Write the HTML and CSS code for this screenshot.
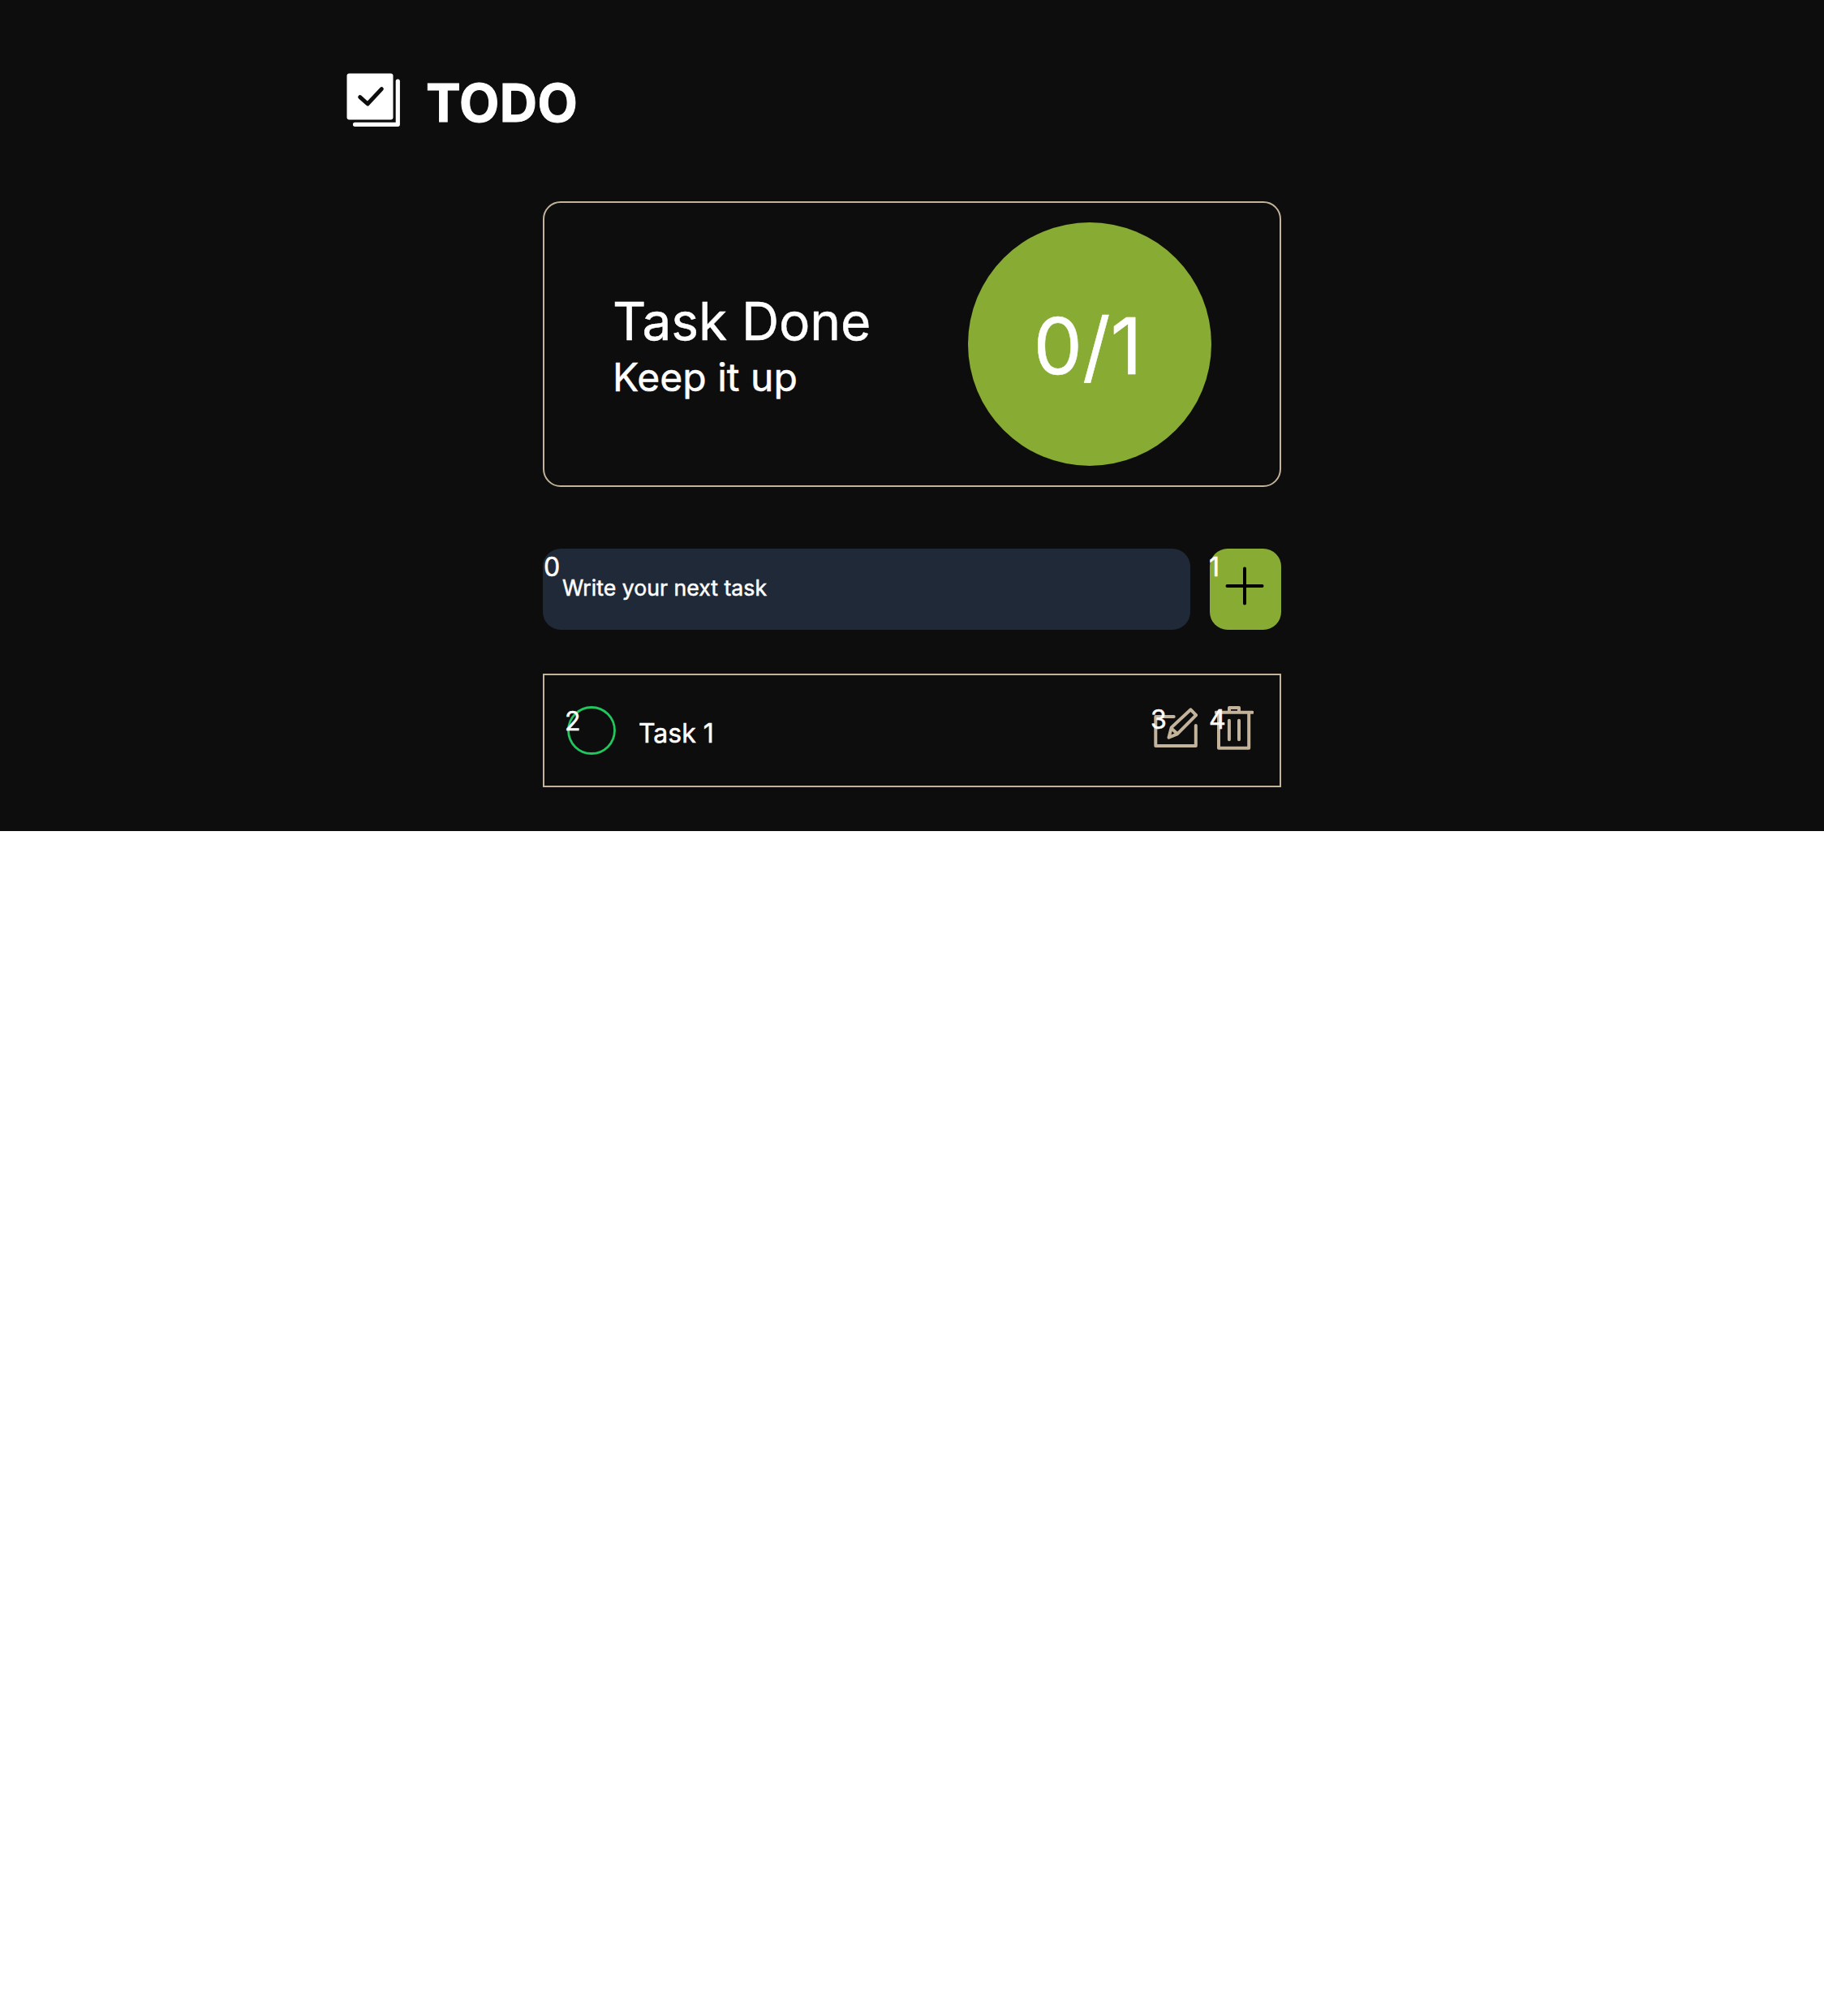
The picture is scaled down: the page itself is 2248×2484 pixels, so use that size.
FILE: index.html
```html
<!DOCTYPE html>
<html lang="en">
<head>
<meta charset="utf-8">
<title>TODO</title>
<link rel="stylesheet" href="styles.css">
</head>
<body>
<div class="app">
  <header class="header">
    <svg class="logo" viewBox="0 0 68 68">
      <rect x="0.5" y="0.5" width="57" height="57" rx="3" fill="#fff"/>
      <path d="M16.7 29.7l9.4 8.3 17.2-18.4" fill="none" stroke="#0d0d0d" stroke-width="5" stroke-linecap="round" stroke-linejoin="round"/>
      <path d="M63.3 10v53.3H10.5" fill="none" stroke="#fff" stroke-width="5.2" stroke-linecap="round" stroke-linejoin="round"/>
    </svg>
    <h1 class="title">TODO</h1>
  </header>
  <main class="content">
    <section class="summary">
      <div class="summary-text">
        <p class="summary-title">Task Done</p>
        <p class="summary-note">Keep it up</p>
      </div>
      <div class="counter"><span>0/1</span></div>
    </section>
    <form class="new-task">
      <div class="field"><span class="hint hint-field">0</span><span class="placeholder">Write your next task</span></div>
      <div class="add"><span class="hint hint-add">1</span>
        <svg class="plus" viewBox="0 0 48 48"><path d="M24 2.5v43M2.5 24h43" stroke="#000" stroke-width="4" stroke-linecap="round"/></svg>
      </div>
    </form>
    <article class="task">
      <div class="check"><span class="hint hint-check">2</span>
        <svg class="ring" viewBox="0 0 60 60"><circle cx="30" cy="30" r="28.5" fill="none" stroke="#22c55e" stroke-width="2.8"/></svg>
      </div>
      <p class="task-name">Task 1</p>
      <div class="action edit"><span class="hint hint-edit">3</span>
        <svg class="icon-edit" viewBox="0 0 56 56"><path d="M26.7 14H4.3v36h49.5V25M20.5 39.7l3.2-12.3L47.5 5.3l6.6 6.9L31 35.3l-10.5 4.4zM23.7 28.4l6.8 6.4"/></svg>
      </div>
      <div class="action trash"><span class="hint hint-trash">4</span>
        <svg class="icon-trash" viewBox="0 0 48 56"><path d="M1.5 8.7h45M5 8.7v44h37.2v-44M18 7.5V3h12v4.5M17.9 18.8v23.4M30 18.8v23.4"/></svg>
      </div>
    </article>
  </main>
</div>
</body>
</html>
```
FILE: styles.css
```css
* { box-sizing: border-box; }
body { margin: 0; background: #fff; color: #fff; font-family: Inter, "Liberation Sans", sans-serif; -webkit-text-stroke: 0.5px #fff; }
h1, p { margin: 0; }
svg { display: block; flex: none; }
.app { height: 1024px; background: #0d0d0d; }
.header { display: flex; gap: 30px; height: 248px; padding: 90px 0 0 427px; }
.logo { width: 68px; height: 68px; }
.title { font-size: 64px; line-height: 74px; font-weight: 700; letter-spacing: 0.4px; -webkit-text-stroke-width: 1px; }
.content { width: 910px; margin: 0 auto; }
.summary { display: flex; justify-content: space-between; align-items: center; height: 352px; padding: 0 84px; border: 2px solid #c2b39a; border-radius: 22px; }
.summary-text { padding-top: 10px; }
.summary-title { font-size: 64px; line-height: 72px; letter-spacing: -0.1px; }
.summary-note { font-size: 48px; line-height: 66px; }
.counter { display: flex; align-items: center; justify-content: center; width: 300px; height: 300px; padding: 4px 5px 0 0; border-radius: 50%; background: #88ab33; font-size: 96px; }
.new-task { display: flex; gap: 24px; height: 100px; margin: 76px 0 54px; }
.field, .add { position: relative; border-radius: 22px; }
.field { flex: 1; background: #1f2937; padding: 0 24px; line-height: 97px; font-size: 26.67px; }
.add { width: 88px; padding: 22px 0 0 19px; background: #88ab33; }
.plus { width: 48px; height: 48px; }
.task { display: flex; height: 140px; padding: 38px 32px 0 28px; border: 2px solid #c2b39a; }
.check, .action { position: relative; }
.ring { width: 60px; height: 60px; }
.task-name { flex: 1; padding-left: 28px; font-size: 32px; line-height: 68px; }
.action { margin-top: -1px; }
.action path { fill: none; stroke: #c2b39a; stroke-width: 4; stroke-linecap: round; stroke-linejoin: round; }
.edit { margin-right: 21px; }
.icon-edit { width: 56px; height: 56px; }
.icon-trash { width: 48px; height: 56px; }
.hint { position: absolute; font-size: 32px; line-height: 40px; }
.hint-field { left: 1px; top: 3px; }
.hint-add { left: -1px; top: 3px; }
.hint-check { left: -3px; top: -1px; }
.hint-edit { left: -2px; top: -2px; }
.hint-trash { left: -7px; top: -2px; }
```
